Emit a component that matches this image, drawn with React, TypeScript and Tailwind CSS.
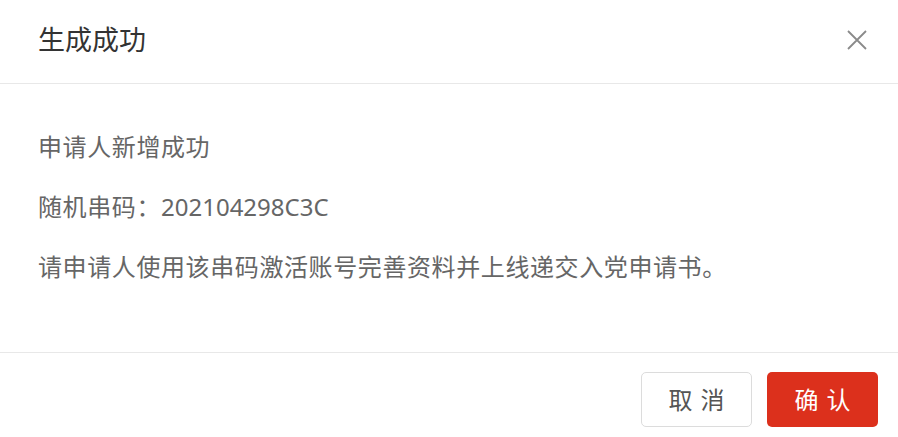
export default function App() {
  return (
    <div
      className="w-[898px] h-[437px] bg-white flex flex-col overflow-hidden"
      style={{ fontFamily: '"Noto Sans", "Noto Sans CJK SC", sans-serif' }}
    >
      {/* Header */}
      <div className="h-[84px] shrink-0 flex items-center justify-between pl-[38px] pr-[30px] pb-[5px] border-b border-[#e8e8e8]">
        <span className="text-[27px] leading-none text-[#333333]">生成成功</span>
        <button className="w-[22px] h-[22px] flex items-center justify-center mt-[2px]">
          <svg width="20" height="20" viewBox="0 0 20 20" fill="none">
            <path d="M1 1L19 19M19 1L1 19" stroke="#8a8a8a" strokeWidth="1.8" />
          </svg>
        </button>
      </div>

      {/* Body */}
      <div className="h-[269px] shrink-0 flex flex-col gap-6 pl-[38px] pt-[45px] border-b border-[#e8e8e8] text-[24px] leading-[36px] tracking-[0.6px] text-[#666666]">
        <p>申请人新增成功</p>
        <p>
          随机串码：<span className="tracking-normal">202104298C3C</span>
        </p>
        <p>请申请人使用该串码激活账号完善资料并上线递交入党申请书。</p>
      </div>

      {/* Footer */}
      <div className="flex-1 flex items-start justify-end gap-[15px] pr-[20px] pt-[19px]">
        <button className="w-[111px] h-[55px] rounded-[5px] border border-[#dcdcdc] bg-white text-[24px] text-[#555555] tracking-[8px] pl-[8px]">
          取消
        </button>
        <button className="w-[111px] h-[55px] rounded-[5px] bg-[#dc301c] text-[24px] text-white tracking-[8px] pl-[8px]">
          确认
        </button>
      </div>
    </div>
  );
}
